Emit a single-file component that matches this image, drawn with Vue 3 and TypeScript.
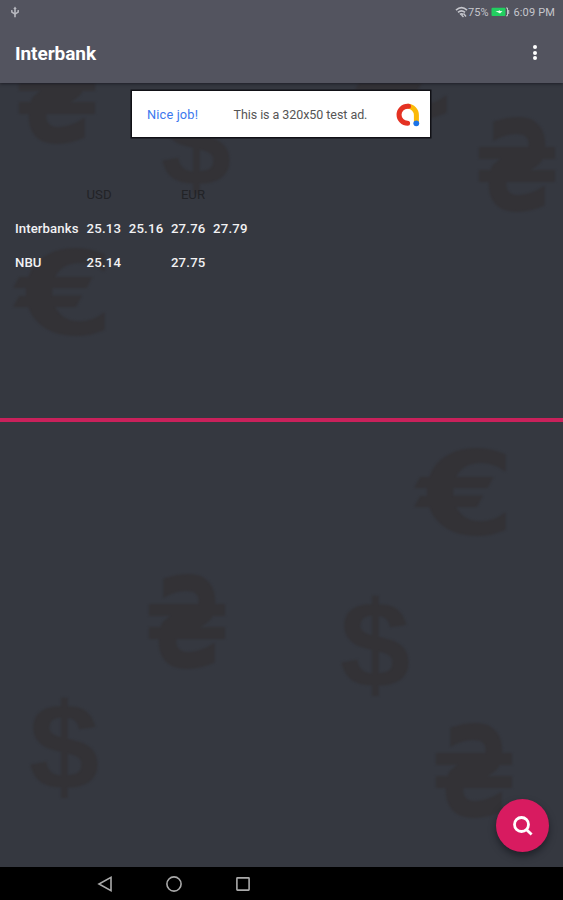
<script setup lang="ts">
interface Mark {
  glyph: string
  kind: 'hryvnia' | 'dollar' | 'euro'
  x: number
  y: number
}

interface Rate {
  label: string
  values: string[]
}

// Centre x and baseline y of every currency sign, relative to the content area.
const marks: Mark[] = [
  { glyph: '₴', kind: 'hryvnia', x: 57, y: 59 },
  { glyph: '$', kind: 'dollar', x: 196, y: 102 },
  { glyph: '€', kind: 'euro', x: 407, y: 34 },
  { glyph: '₴', kind: 'hryvnia', x: 517, y: 127 },
  { glyph: '€', kind: 'euro', x: 65, y: 251 },
  { glyph: '€', kind: 'euro', x: 466, y: 451 },
  { glyph: '₴', kind: 'hryvnia', x: 187, y: 584 },
  { glyph: '$', kind: 'dollar', x: 375, y: 604 },
  { glyph: '$', kind: 'dollar', x: 64, y: 706 },
  { glyph: '₴', kind: 'hryvnia', x: 474, y: 733 },
]

const stretch: Record<Mark['kind'], number> = { hryvnia: 0.79, dollar: 1.04, euro: 1.22 }

const rates: Rate[] = [
  { label: 'Interbanks', values: ['25.13', '25.16', '27.76', '27.79'] },
  { label: 'NBU', values: ['25.14', '', '27.75', ''] },
]
</script>

<template>
  <div class="screen">
    <header class="top">
      <div class="status">
        <svg class="usb" viewBox="0 0 10 12" width="10" height="12">
          <path d="M5 .5 6.7 3H5.8v3.8L7.5 5.6V4h1.4v2.4L5.8 8.6v2.7H4.2V8.6L1.1 6.4V4h1.4v1.6l1.7 1.2V3H3.3z" />
        </svg>
        <div class="status-right">
          <svg class="wifi" viewBox="0 0 13 12" width="13" height="12">
            <path d="M1 4.2Q6.5-.8 12 4.2M3 6.4Q6.5 3.2 10 6.4M5 8.5Q6.5 7.2 8 8.5" />
            <path class="link" d="M8.5 7.5 11 10.5M6.5 9 8.5 11" />
          </svg>
          <span class="percent">75%</span>
          <svg class="battery" viewBox="0 0 20 10" width="20" height="10">
            <rect x=".5" y=".8" width="14" height="8.2" rx="1" fill="#22cf60" />
            <path d="M4.5 4h3l1-1 .5 1h2.5L9 6.5z" fill="#dfffe9" />
            <path d="M15 1h1.5v7.8H15M17.7 3v4" fill="none" stroke="#c5c6cc" stroke-width="1" />
          </svg>
          <span class="clock">6:09 PM</span>
        </div>
      </div>
      <div class="appbar">
        <h1>Interbank</h1>
        <button class="more" aria-label="More options"><i></i><i></i><i></i></button>
      </div>
    </header>

    <main class="content">
      <svg class="backdrop" viewBox="0 0 563 784" width="563" height="784" aria-hidden="true">
        <text
          v-for="(m, i) in marks"
          :key="i"
          :class="m.kind"
          :transform="`translate(${m.x} ${m.y}) scale(${stretch[m.kind]} 1)`"
        >{{ m.glyph }}</text>
      </svg>

      <section class="upper">
        <div class="ad">
          <span class="ad-title">Nice job!</span>
          <span class="ad-text">This is a 320x50 test ad.</span>
          <svg class="admob" viewBox="0 0 24 24" width="24" height="24">
            <path d="M12 3.2A8.8 8.8 0 0 1 20.4 12v8" stroke="#fbb908" />
            <path d="M12.5 3.2H11.6a8.4 8.4 0 0 0 0 17.1" stroke="#e43223" />
            <circle cx="20.3" cy="20.3" r="2.9" fill="#1a73e8" />
          </svg>
        </div>

        <div class="table">
          <div class="row head">
            <span></span>
            <span class="usd">USD</span>
            <span class="eur">EUR</span>
          </div>
          <div v-for="r in rates" :key="r.label" class="row">
            <span class="label">{{ r.label }}</span>
            <span v-for="(v, i) in r.values" :key="i">{{ v }}</span>
          </div>
        </div>
      </section>

      <div class="divider"></div>

      <section class="lower">
        <button class="fab" aria-label="Search">
          <svg viewBox="0 0 24 24" width="24" height="24">
            <circle cx="10.5" cy="10.5" r="7" />
            <path d="m15.4 15.4 5.2 5.2" />
          </svg>
        </button>
      </section>
    </main>

    <nav class="navbar">
      <svg viewBox="0 0 18 18" width="18" height="18"><path d="M15 2.4v13.2L3 9z" /></svg>
      <svg viewBox="0 0 18 18" width="18" height="18"><circle cx="9" cy="9" r="7.1" /></svg>
      <svg viewBox="0 0 18 18" width="18" height="18"><rect x="2.9" y="2.9" width="12.2" height="12.2" rx=".5" /></svg>
    </nav>
  </div>
</template>

<style>
body {
  margin: 0;
  background: #353840;
}
</style>

<style scoped>
.screen {
  display: flex;
  flex-direction: column;
  width: 563px;
  height: 900px;
  overflow: hidden;
  background: #353840;
  color: #f2f2f4;
  font-family: Roboto, "Liberation Sans", sans-serif;
}

button {
  border: 0;
  padding: 0;
  background: none;
}

.top {
  box-sizing: border-box;
  height: 83px;
  background: #53545f;
  box-shadow: 0 1px 3px rgba(20, 20, 28, 0.7);
  position: relative;
  z-index: 1;
}

.status {
  display: flex;
  justify-content: space-between;
  align-items: center;
  height: 24px;
  padding: 0 8px 0 10px;
  color: #c5c6cc;
  font-size: 11px;
}

.usb {
  fill: #b8b9c0;
}

.status-right {
  display: flex;
  align-items: center;
}

.wifi path {
  fill: none;
  stroke: #c5c6cc;
  stroke-width: 1.7;
}

.wifi .link {
  stroke-width: 1.4;
}

.battery {
  margin: 0 2px 0 3px;
}

.clock {
  letter-spacing: 0.15px;
}

.appbar {
  display: flex;
  justify-content: space-between;
  align-items: center;
  height: 59px;
  padding: 0 26px 0 15px;
}

h1 {
  margin: 0;
  font-size: 19px;
  line-height: 24px;
  font-weight: 700;
  letter-spacing: -0.05px;
  color: #fff;
}

.more {
  display: grid;
  gap: 1.6px;
  margin-top: -2px;
}

.more i {
  width: 4px;
  height: 4px;
  border-radius: 50%;
  background: #fff;
}

.content {
  display: flex;
  flex-direction: column;
  height: 784px;
  position: relative;
}

.backdrop {
  position: absolute;
  inset: 0;
  fill: #333236;
  filter: blur(1.3px);
  font-family: "DejaVu Sans", sans-serif;
  font-weight: 700;
  text-anchor: middle;
}

.hryvnia {
  font-size: 125px;
}

.dollar {
  font-family: "Liberation Sans", sans-serif;
  font-size: 122px;
}

.euro {
  font-size: 116px;
}

.upper {
  height: 327px;
  padding-top: 8px;
  position: relative;
}

.ad {
  display: flex;
  align-items: center;
  box-sizing: border-box;
  width: 298.5px;
  height: 46px;
  margin-left: 131.5px;
  padding: 1px 10px 0 15.5px;
  background: #fff;
  box-shadow: 0 0 0 1.5px #111116;
  font-size: 12.5px;
}

.ad-title {
  width: 86.5px;
  color: #3c78ee;
  font-size: 12.8px;
  letter-spacing: 0.15px;
}

.ad-text {
  color: #555;
  white-space: nowrap;
  letter-spacing: -0.06px;
}

.admob {
  margin-left: auto;
}

.admob path {
  fill: none;
  stroke-width: 5;
  stroke-linecap: round;
}

.table {
  padding: 40px 0 0 15px;
}

.row {
  display: grid;
  grid-template-columns: 71.5px repeat(4, 42.2px);
  align-items: center;
  height: 34.4px;
  font-size: 13.2px;
  font-weight: 500;
  letter-spacing: 0.2px;
}

.label {
  letter-spacing: 0.08px;
}

.head {
  color: #222327;
  font-weight: 400;
  letter-spacing: 0;
}

.eur {
  grid-column: 4;
  padding-left: 10px;
}

.divider {
  height: 4px;
  background: #c9215b;
  position: relative;
}

.lower {
  flex: 1;
  display: flex;
  justify-content: flex-end;
  align-items: flex-end;
  padding: 0 14.5px 15.5px 0;
  position: relative;
}

.fab {
  display: grid;
  place-items: center;
  width: 53px;
  height: 53px;
  padding: 2px 0 0 2px;
  border-radius: 50%;
  background: #d81b60;
  box-shadow: 0 4px 7px rgba(10, 12, 18, 0.5);
}

.fab svg {
  fill: none;
  stroke: #fff;
  stroke-width: 2.8;
}

.navbar {
  display: flex;
  align-items: center;
  gap: 51px;
  flex: 1;
  padding-left: 95.5px;
  background: #000;
}

.navbar svg {
  fill: none;
  stroke: #aaa;
  stroke-width: 1.6;
}
</style>
